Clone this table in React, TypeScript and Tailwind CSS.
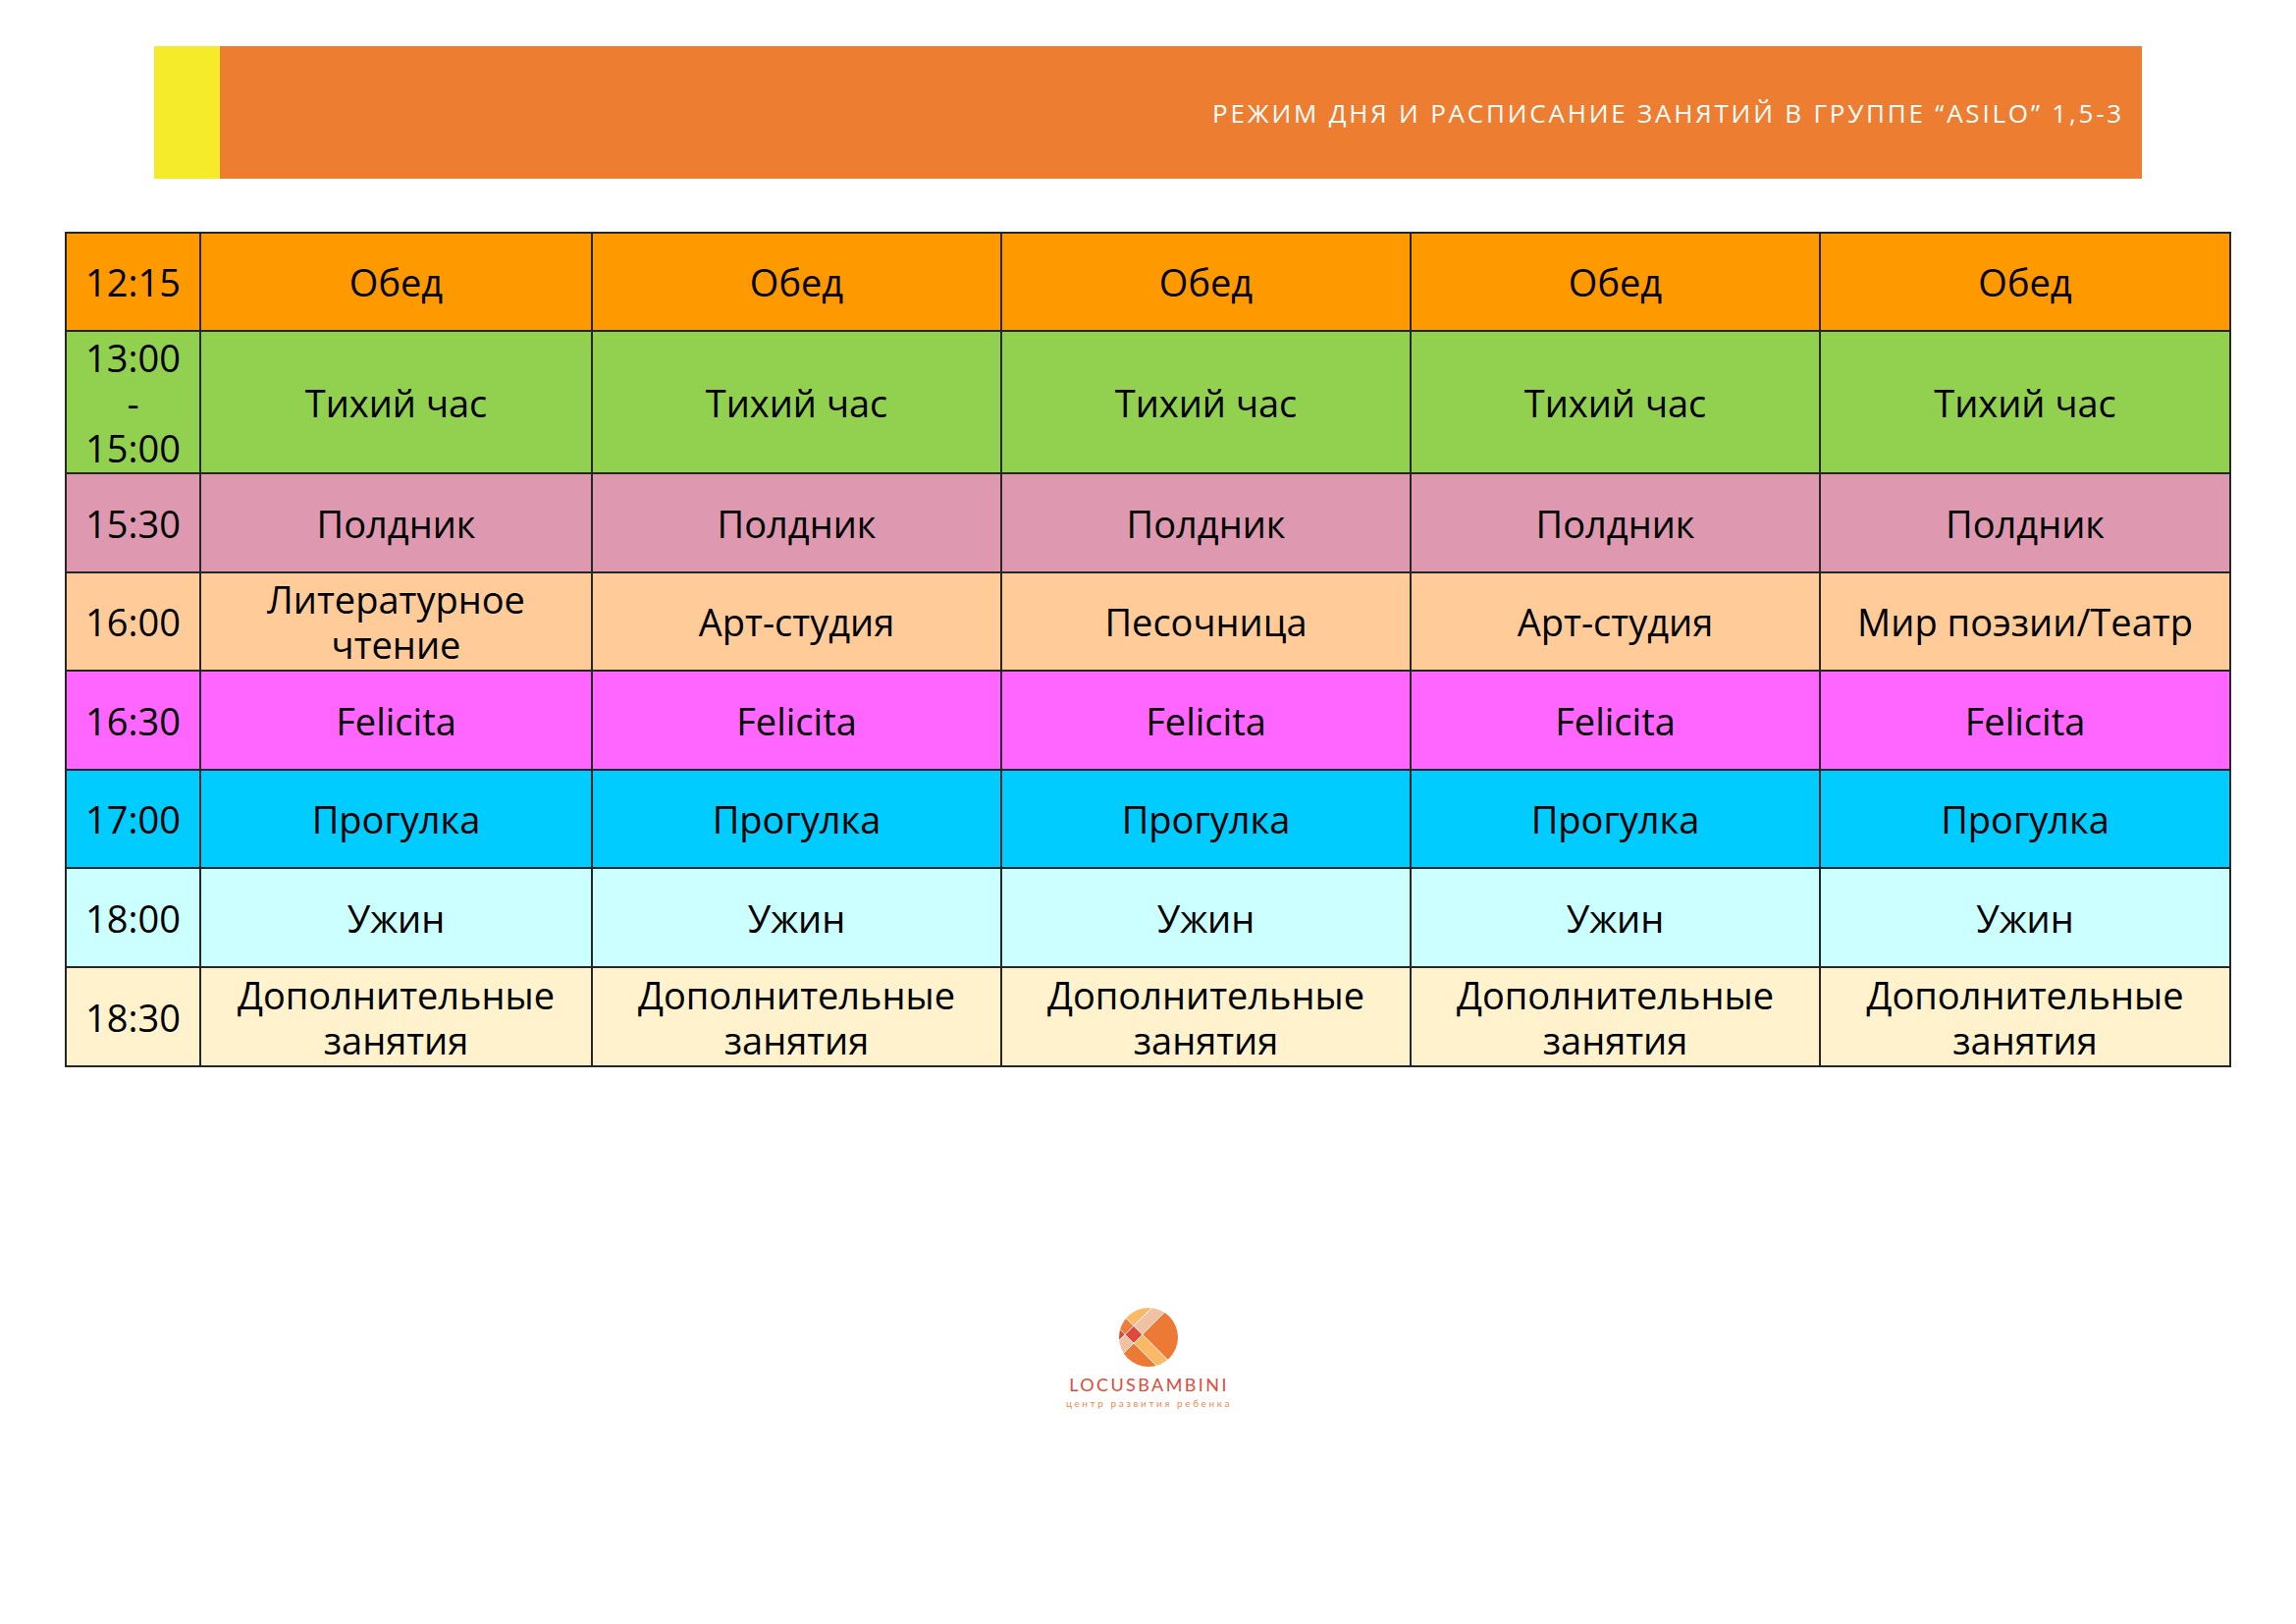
import React from "react";

type Row = { time: string[]; bg: string; cells: string[][] };

const rows: Row[] = [
  { time: ["12:15"], bg: "bg-[#ff9900]", cells: Array(5).fill(["Обед"]) },
  { time: ["13:00", "-", "15:00"], bg: "bg-[#92d050]", cells: Array(5).fill(["Тихий час"]) },
  { time: ["15:30"], bg: "bg-[#de98b0]", cells: Array(5).fill(["Полдник"]) },
  {
    time: ["16:00"],
    bg: "bg-[#ffcc99]",
    cells: [["Литературное", "чтение"], ["Арт-студия"], ["Песочница"], ["Арт-студия"], ["Мир поэзии/Театр"]],
  },
  { time: ["16:30"], bg: "bg-[#ff66ff]", cells: Array(5).fill(["Felicita"]) },
  { time: ["17:00"], bg: "bg-[#00ccff]", cells: Array(5).fill(["Прогулка"]) },
  { time: ["18:00"], bg: "bg-[#ccffff]", cells: Array(5).fill(["Ужин"]) },
  { time: ["18:30"], bg: "bg-[#fff2cc]", cells: Array(5).fill(["Дополнительные", "занятия"]) },
];

function Cell({ lines, bg }: { lines: string[]; bg: string }) {
  return (
    <div className={`${bg} flex flex-col items-center justify-center text-center text-[38px] leading-[46px] text-black whitespace-nowrap`}>
      {lines.map((l, i) => (
        <span key={i} className="block h-[46px]">{l}</span>
      ))}
    </div>
  );
}

function Logo() {
  const sB = [-80, 33.3, 51, 200];
  const dB = [-120, -21, -3.3, 120];
  // grid[sIndex][dIndex], dIndex 0: d<d2, 1: d2<d<d1, 2: d>d1
  const grid = [
    ["#dd4a3b", "#ee7d3a", "#f9b968"],
    ["#f0c2a3", "#dd4a3b", "#f0c2a3"],
    ["#ec7a35", "#f9b968", "#ec7a35"],
  ];
  const pt = (s: number, d: number) => `${(s + d) / 2},${(s - d) / 2}`;
  const polys: React.ReactNode[] = [];
  for (let i = 0; i < 3; i++) {
    for (let j = 0; j < 3; j++) {
      const s0 = sB[i], s1 = sB[i + 1], d0 = dB[j], d1 = dB[j + 1];
      polys.push(
        <polygon
          key={`${i}-${j}`}
          points={`${pt(s0, d0)} ${pt(s0, d1)} ${pt(s1, d1)} ${pt(s1, d0)}`}
          fill={grid[i][j]}
          stroke="#ffffff"
          strokeWidth={0.7}
        />
      );
    }
  }
  return (
    <svg width="60" height="60" viewBox="0 0 60 60">
      <defs>
        <clipPath id="lbclip">
          <circle cx="30" cy="30" r="30" />
        </clipPath>
      </defs>
      <g clipPath="url(#lbclip)">{polys}</g>
    </svg>
  );
}

export default function App() {
  return (
    <div className="w-[2339px] h-[1654px] bg-white relative overflow-hidden" style={{ fontFamily: '"Open Sans", "DejaVu Sans", sans-serif' }}>
      {/* Header */}
      <div className="ml-[157px] mt-[47px] w-[2025px] h-[135px] flex">
        <div className="w-[67px] h-full bg-[#f5eb2b]" />
        <div className="flex-1 h-full bg-[#ed7d31] flex items-center justify-end pr-[18px] pt-[2px]">
          <span className="text-white text-[26px] font-normal tracking-[2.8px] whitespace-nowrap">
            РЕЖИМ ДНЯ И РАСПИСАНИЕ ЗАНЯТИЙ В ГРУППЕ “ASILO” 1,5-3
          </span>
        </div>
      </div>

      {/* Table */}
      <div className="ml-[66px] mt-[54px] w-[2207px] bg-[#262626] p-[2px] grid grid-cols-[135px_397px_415px_415px_415px_416px] grid-rows-[98px_143px_99px_98px_99px_98px_99px_99px] gap-[2px]">
        {rows.map((r, ri) => (
          <React.Fragment key={ri}>
            <Cell lines={r.time} bg={r.bg} />
            {r.cells.map((c, ci) => (
              <Cell key={ci} lines={c} bg={r.bg} />
            ))}
          </React.Fragment>
        ))}
      </div>

      {/* Logo */}
      <div className="mt-[245px] flex flex-col items-center" style={{ fontFamily: 'Lato, "Open Sans", sans-serif' }}>
        <Logo />
        <div className="mt-[9px] text-[18px] leading-[18px] tracking-[2.4px] text-[#e04b3b] pl-[2px]">LOCUSBAMBINI</div>
        <div className="mt-[4px] text-[10px] leading-[12px] tracking-[2.6px] text-[#f0884b] pl-[2px]">центр развития ребенка</div>
      </div>
    </div>
  );
}
